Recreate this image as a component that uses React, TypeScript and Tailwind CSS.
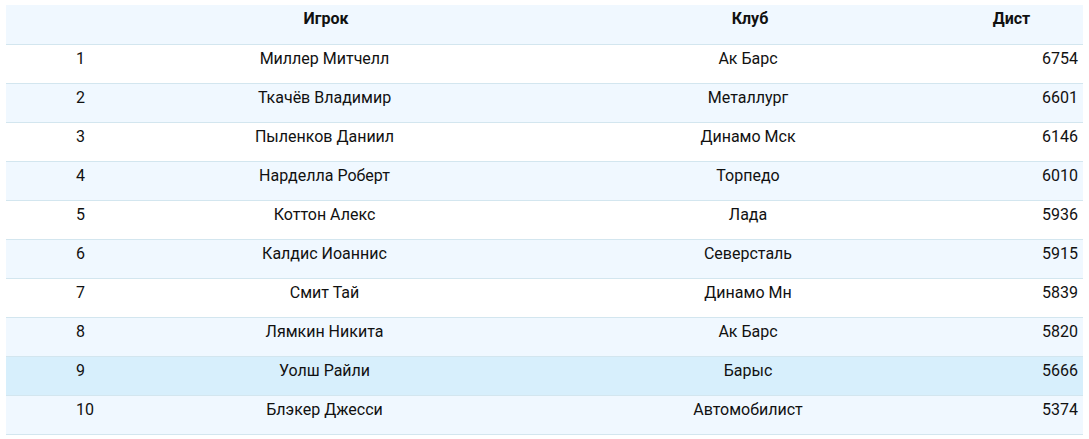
import React from 'react';

const rows = [
  { n: 1, player: 'Миллер Митчелл', club: 'Ак Барс', dist: 6754 },
  { n: 2, player: 'Ткачёв Владимир', club: 'Металлург', dist: 6601 },
  { n: 3, player: 'Пыленков Даниил', club: 'Динамо Мск', dist: 6146 },
  { n: 4, player: 'Нарделла Роберт', club: 'Торпедо', dist: 6010 },
  { n: 5, player: 'Коттон Алекс', club: 'Лада', dist: 5936 },
  { n: 6, player: 'Калдис Иоаннис', club: 'Северсталь', dist: 5915 },
  { n: 7, player: 'Смит Тай', club: 'Динамо Мн', dist: 5839 },
  { n: 8, player: 'Лямкин Никита', club: 'Ак Барс', dist: 5820 },
  { n: 9, player: 'Уолш Райли', club: 'Барыс', dist: 5666 },
  { n: 10, player: 'Блэкер Джесси', club: 'Автомобилист', dist: 5374 },
];

export default function App() {
  return (
    <div className="w-[1089px] h-[439px] bg-white pt-[5px] pl-[6px] pr-[6px] font-['Roboto',sans-serif] text-[16px] text-[#111]">
      <div className="grid grid-cols-[78px_484px_364px_151px] h-[40px] bg-[#f0f8ff] border-b border-[#d3e6ef] font-bold leading-5 pt-[4px]">
        <div />
        <div className="text-center">Игрок</div>
        <div className="text-center">Клуб</div>
        <div className="text-center pl-[8px]">Дист</div>
      </div>
      {rows.map((r) => (
        <div
          key={r.n}
          className={`grid grid-cols-[78px_484px_364px_151px] h-[39px] border-b border-[#d3e6ef] leading-5 pt-[4px] ${
            r.n === 9 ? 'bg-[#d7effc]' : r.n % 2 === 0 ? 'bg-[#f0f8ff]' : 'bg-white'
          }`}
        >
          <div className="text-center pl-[70px] whitespace-nowrap">{r.n}</div>
          <div className="text-center pr-[3px]">{r.player}</div>
          <div className="text-center pr-[4px]">{r.club}</div>
          <div className="text-right pr-[5px]">{r.dist}</div>
        </div>
      ))}
    </div>
  );
}
